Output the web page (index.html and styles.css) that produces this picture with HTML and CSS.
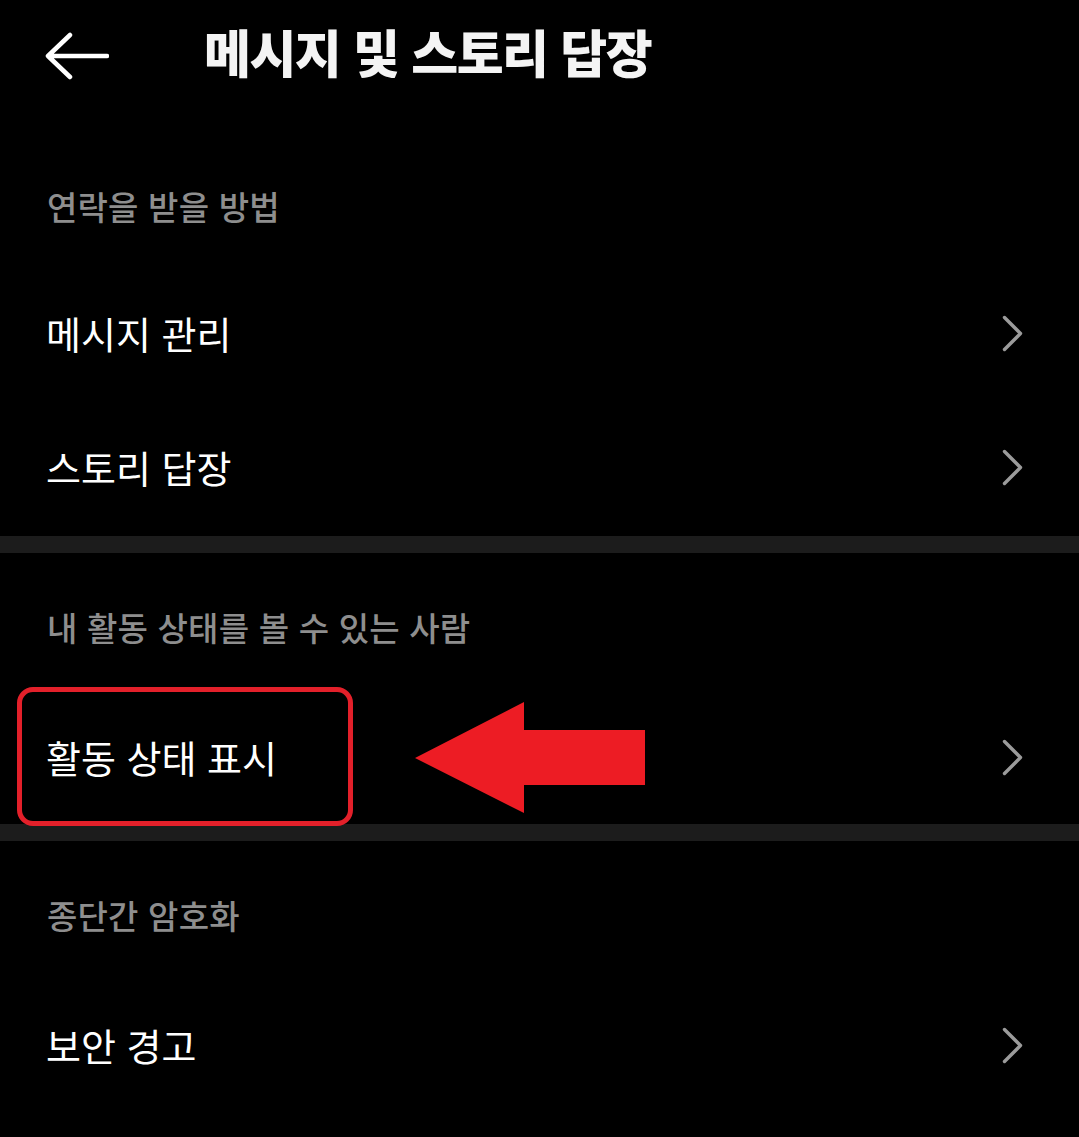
FILE: index.html
```html
<!DOCTYPE html>
<html lang="ko">
<head>
<meta charset="utf-8">
<title>메시지 및 스토리 답장</title>
<link rel="stylesheet" href="styles.css">
</head>
<body>
<header class="topbar">
  <svg class="back" width="64" height="48" viewBox="0 0 64 48" aria-hidden="true">
    <path d="M62 24 H3 M25 3 L3 24 L25 45" fill="none" stroke="#fff" stroke-width="4.5" stroke-linecap="round" stroke-linejoin="round"/>
  </svg>
  <h1 class="title">메시지 및 스토리 답장</h1>
</header>

<section class="group">
  <div class="section-title first">연락을 받을 방법</div>
  <div class="row"><span class="label">메시지 관리</span><svg class="chev" width="21" height="37" viewBox="0 0 21 37"><path d="M2.5 2.5 L18.5 18.5 L2.5 34.5" fill="none" stroke="#9b9b9b" stroke-width="3.4" stroke-linecap="round" stroke-linejoin="round"/></svg></div>
  <div class="row"><span class="label">스토리 답장</span><svg class="chev" width="21" height="37" viewBox="0 0 21 37"><path d="M2.5 2.5 L18.5 18.5 L2.5 34.5" fill="none" stroke="#9b9b9b" stroke-width="3.4" stroke-linecap="round" stroke-linejoin="round"/></svg></div>
</section>

<div class="divider first-divider"></div>

<section class="group">
  <div class="section-title">내 활동 상태를 볼 수 있는 사람</div>
  <div class="row"><span class="label">활동 상태 표시</span><svg class="chev" width="21" height="37" viewBox="0 0 21 37"><path d="M2.5 2.5 L18.5 18.5 L2.5 34.5" fill="none" stroke="#9b9b9b" stroke-width="3.4" stroke-linecap="round" stroke-linejoin="round"/></svg></div>
</section>

<div class="divider"></div>

<section class="group">
  <div class="section-title">종단간 암호화</div>
  <div class="row"><span class="label">보안 경고</span><svg class="chev" width="21" height="37" viewBox="0 0 21 37"><path d="M2.5 2.5 L18.5 18.5 L2.5 34.5" fill="none" stroke="#9b9b9b" stroke-width="3.4" stroke-linecap="round" stroke-linejoin="round"/></svg></div>
</section>

<div class="highlight-box"></div>
<svg class="red-arrow" width="230" height="111" viewBox="0 0 230 111" aria-hidden="true">
  <path d="M0 56 L109 0 L109 28 L230 28 L230 83 L109 83 L109 111 Z" fill="#ed1c24"/>
</svg>
</body>
</html>
```

FILE: styles.css
```css
html, body {
  margin: 0;
  padding: 0;
  background: #000;
}

body {
  font-family: "Noto Sans CJK KR", "Noto Sans", sans-serif;
  color: #fff;
  min-height: 1137px;
  position: relative;
  overflow: hidden;
}

.topbar {
  height: 110px;
  display: flex;
  align-items: center;
  padding-left: 45px;
  box-sizing: border-box;
}

.back {
  display: block;
  margin-top: 2px;
}

.title {
  margin: -8px 0 0 95px;
  font-size: 51px;
  font-weight: 900;
  letter-spacing: -1.5px;
  line-height: 60px;
  color: #f4f4f4;
}

.section-title {
  padding: 56px 47px 45px;
  font-size: 33px;
  line-height: 36px;
  font-weight: 500;
  letter-spacing: 0.2px;
  color: #8e8e8e;
}

.section-title.first {
  padding-top: 78px;
  padding-bottom: 42px;
}

.row {
  height: 134px;
  display: flex;
  align-items: center;
  justify-content: space-between;
  padding: 0 56px 0 46px;
}

.label {
  font-size: 38px;
  line-height: 44px;
  font-weight: 400;
  color: #fff;
}

.chev {
  display: block;
}

.divider {
  height: 17px;
  background: #1c1c1c;
}

.first-divider {
  margin-top: 2px;
}

.highlight-box {
  position: absolute;
  left: 17px;
  top: 687px;
  width: 336px;
  height: 139px;
  box-sizing: border-box;
  border: 5px solid #e3202a;
  border-radius: 16px;
}

.red-arrow {
  position: absolute;
  left: 415px;
  top: 702px;
}
```
